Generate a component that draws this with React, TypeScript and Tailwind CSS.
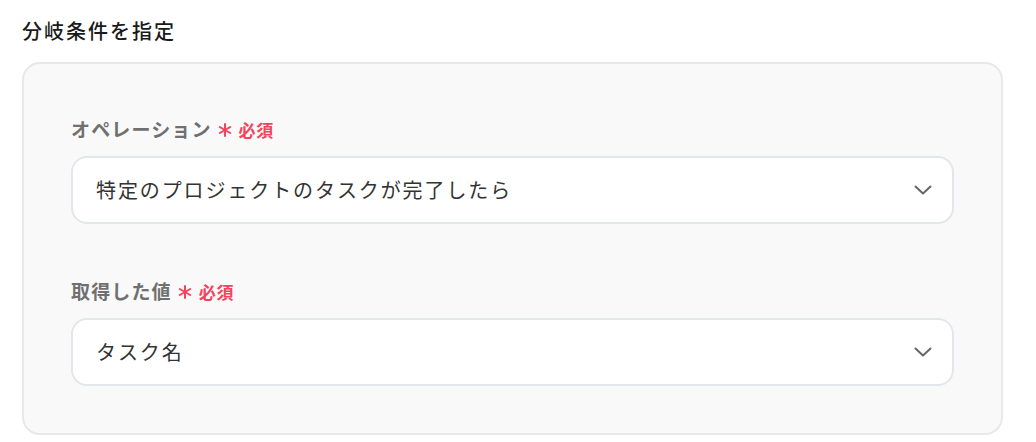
import React from "react";

const fontStack = {
  fontFamily: '"Noto Sans CJK JP", "Noto Sans", sans-serif',
};

const ChevronDown = () => (
  <svg width="18" height="10" viewBox="0 0 18 10" fill="none" className="shrink-0">
    <path d="M1.5 1.5L9 8.5L16.5 1.5" stroke="#666" strokeWidth="2" strokeLinecap="round" strokeLinejoin="round" />
  </svg>
);

const Asterisk = () => (
  <svg width="14" height="14" viewBox="0 0 14 14" fill="none" className="shrink-0">
    <g stroke="#f5435e" strokeWidth="2" strokeLinecap="round">
      <path d="M7 1V13" />
      <path d="M1.8 4L12.2 10" />
      <path d="M12.2 4L1.8 10" />
    </g>
  </svg>
);

const Field = ({ label, value }: { label: string; value: string }) => (
  <div className="flex flex-col">
    <div className="flex items-center h-[24px]">
      <span className="text-[19px] font-bold text-[#707070] tracking-[0.06em] leading-none">{label}</span>
      <span className="ml-[6px] mt-[4px] flex">
        <Asterisk />
      </span>
      <span className="ml-[7px] mt-[2px] text-[17px] font-bold text-[#f5435e] tracking-[0.04em] leading-none">必須</span>
    </div>
    <div className="mt-[16px] h-[68px] rounded-[16px] border-2 border-[#e3e6ea] bg-white flex items-center justify-between pl-[23px] pr-[20px]">
      <span className="text-[20px] text-[#333] tracking-[0.095em]">{value}</span>
      <ChevronDown />
    </div>
  </div>
);

export default function App() {
  return (
    <div className="w-[1036px] h-[442px] bg-white pl-[22px] pr-[33px] pt-[16px]" style={fontStack}>
      <h2 className="text-[20px] font-medium text-[#1a1a1a] tracking-[0.1em] leading-[30px]">分岐条件を指定</h2>
      <div className="mt-[16px] h-[373px] rounded-[18px] border-2 border-[#e8e8e8] bg-[#f9f9f9] px-[47px] pt-[52px] flex flex-col gap-[54px]">
        <Field label="オペレーション" value="特定のプロジェクトのタスクが完了したら" />
        <Field label="取得した値" value="タスク名" />
      </div>
    </div>
  );
}
